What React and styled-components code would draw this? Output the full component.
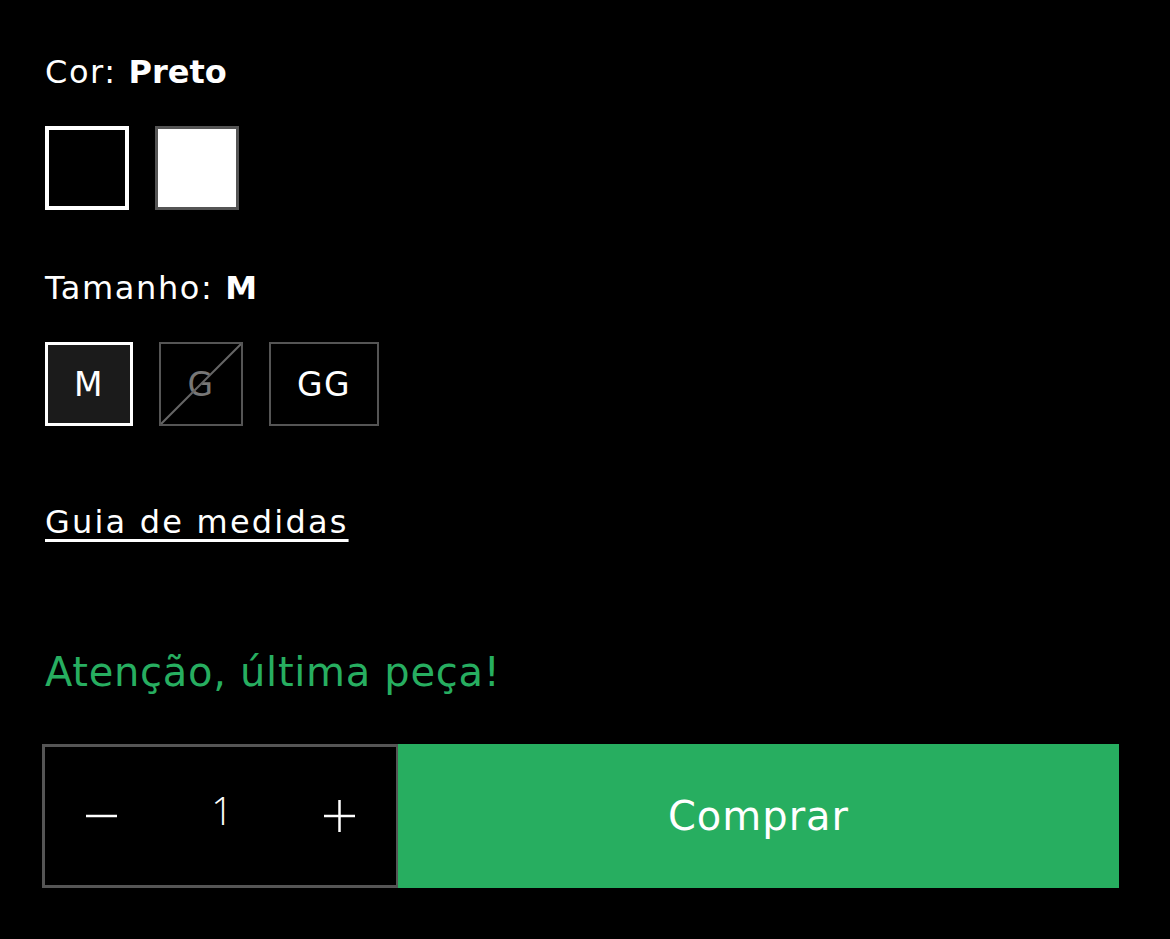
import React from 'react'
import styled, { createGlobalStyle } from 'styled-components'

const GlobalStyle = createGlobalStyle`
    html, body {
        margin: 0;
        background: #000;
    }
    body {
        font-family: "DejaVu Sans", "Open Sans", sans-serif;
        color: #fff;
    }
`

const Wrapper = styled.div`
    width: 1170px;
    height: 939px;
    box-sizing: border-box;
    padding: 48px 51px 0 45px;
    display: flex;
    flex-direction: column;
`

const Label = styled.div`
    margin-top: ${p => p.gap || 0}px;
    font-size: 32px;
    line-height: 48px;
    font-weight: 400;
    letter-spacing: 1.6px;
    b {
        font-weight: 700;
        letter-spacing: 0;
    }
`

const Options = styled.div`
    display: flex;
    gap: 26px;
    margin-top: 30px;
`

const Swatch = styled.button`
    width: 84px;
    height: 84px;
    box-sizing: border-box;
    padding: 0;
    background: ${p => p.color};
    border: ${p => (p.active ? '4px solid #fff' : '3px solid #555')};
    cursor: pointer;
`

const SizeBox = styled.button`
    position: relative;
    min-width: 84px;
    height: 84px;
    box-sizing: border-box;
    padding: 0 26px;
    font-family: inherit;
    font-size: 33px;
    letter-spacing: 1.5px;
    color: ${p => (p.disabled ? '#777' : '#fff')};
    background: ${p => (p.active ? '#1b1b1b' : '#000')};
    border: ${p => (p.active ? '3px solid #fff' : '2px solid #555')};
    overflow: hidden;
    cursor: pointer;
`

const Strike = styled.svg`
    position: absolute;
    inset: 0;
    width: 100%;
    height: 100%;
`

const GuideLink = styled.a`
    margin-top: 72px;
    align-self: flex-start;
    font-size: 32px;
    line-height: 48px;
    letter-spacing: 2.2px;
    color: #fff;
    text-decoration: underline;
    text-decoration-thickness: 3px;
    text-underline-offset: 6px;
`

const Alert = styled.div`
    margin-top: 98px;
    font-size: 40px;
    line-height: 56px;
    letter-spacing: 0.7px;
    color: #27ae60;
`

const BuyRow = styled.div`
    display: flex;
    margin-top: 44px;
    margin-left: -3px;
    height: 144px;
`

const Quantity = styled.div`
    width: 357px;
    box-sizing: border-box;
    border: 3px solid #555;
    display: flex;
    align-items: center;
    justify-content: space-between;
    padding: 0 38px 0 39px;
`

const QtyButton = styled.button`
    width: 36px;
    height: 36px;
    padding: 0;
    background: none;
    border: none;
    display: flex;
    align-items: center;
    justify-content: center;
    cursor: pointer;
`

const QtyValue = styled.span`
    font-family: "Open Sans", sans-serif;
    font-size: 38px;
    font-weight: 300;
    margin-top: -12px;
    margin-left: 2px;
`

const BuyButton = styled.button`
    flex: 1;
    margin-left: -1px;
    border: none;
    background: #27ae60;
    color: #fff;
    font-family: inherit;
    font-size: 40px;
    letter-spacing: 1px;
    cursor: pointer;
`

const Minus = () => (
    <svg width="32" height="32" viewBox="0 0 32 32">
        <line x1="0" y1="16" x2="31" y2="16" stroke="#fff" strokeWidth="2.5" />
    </svg>
)

const Plus = () => (
    <svg width="32" height="32" viewBox="0 0 32 32">
        <line x1="0" y1="16" x2="31" y2="16" stroke="#fff" strokeWidth="2.5" />
        <line x1="15.5" y1="0" x2="15.5" y2="32" stroke="#fff" strokeWidth="2.5" />
    </svg>
)

export default function App() {
    return (
        <>
            <GlobalStyle />
            <Wrapper>
                <Label>Cor: <b>Preto</b></Label>
                <Options>
                    <Swatch color="#000" active aria-label="Preto" />
                    <Swatch color="#fff" aria-label="Branco" />
                </Options>

                <Label gap={54}>Tamanho: <b>M</b></Label>
                <Options>
                    <SizeBox active>M</SizeBox>
                    <SizeBox disabled>
                        G
                        <Strike viewBox="0 0 100 100" preserveAspectRatio="none">
                            <line x1="0" y1="100" x2="100" y2="0" stroke="#666" strokeWidth="2" vectorEffect="non-scaling-stroke" />
                        </Strike>
                    </SizeBox>
                    <SizeBox>GG</SizeBox>
                </Options>

                <GuideLink href="#">Guia de medidas</GuideLink>

                <Alert>Atenção, última peça!</Alert>

                <BuyRow>
                    <Quantity>
                        <QtyButton aria-label="Diminuir"><Minus /></QtyButton>
                        <QtyValue>1</QtyValue>
                        <QtyButton aria-label="Aumentar"><Plus /></QtyButton>
                    </Quantity>
                    <BuyButton>Comprar</BuyButton>
                </BuyRow>
            </Wrapper>
        </>
    )
}
